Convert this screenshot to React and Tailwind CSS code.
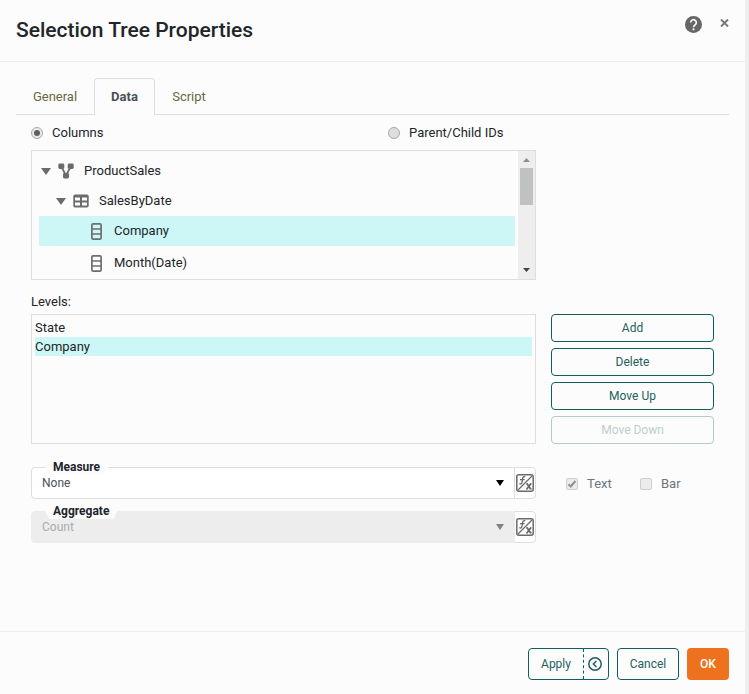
import React from "react";

function Caret({ className }) {
  return (
    <svg viewBox="0 0 10 6" preserveAspectRatio="none" className={className} aria-hidden="true">
      <path d="M0 0H10L5 6Z" fill="currentColor" />
    </svg>
  );
}

function SourceIcon() {
  return (
    <svg viewBox="0 0 16 16" className="size-4" fill="#6b6b6b" aria-hidden="true">
      <path d="M3.5 4L8 12.5L12.5 4" fill="none" stroke="#6b6b6b" strokeWidth="1.7" />
      <rect x="0.3" y="0.5" width="6" height="5.5" rx="1.4" />
      <rect x="9.7" y="0.5" width="6" height="5.5" rx="1.4" />
      <rect x="5" y="10" width="6" height="5.5" rx="1.4" />
    </svg>
  );
}

function TableIcon() {
  return (
    <svg viewBox="0 0 16 14" className="h-3.5 w-4" aria-hidden="true">
      <rect x="0.3" y="0.5" width="15.4" height="13" rx="1.8" fill="#6b6b6b" />
      <path d="M2 3.500h5v3H2zM9 3.500h5v3H9zM2 8.500h5v3H2zM9 8.500h5v3H9z" fill="#fcfcfc" />
    </svg>
  );
}

function ColumnIcon() {
  return (
    <svg viewBox="0 0 11 17" className="h-[17px] w-[11px]" fill="none" stroke="#6e6e6e" strokeWidth="1.7" aria-hidden="true">
      <rect x="0.9" y="0.9" width="9.2" height="15.200" rx="1.2" />
      <path d="M1 6h9M1 11h9" />
    </svg>
  );
}

function FormulaIcon() {
  return (
    <svg viewBox="0 0 18 18" className="size-[18px]" fill="none" stroke="#6a6a6a" aria-hidden="true">
      <rect x="0.8" y="0.8" width="16.4" height="16.4" rx="2" strokeWidth="1.5" />
      <path d="M2 16L16 2" strokeWidth="1.2" />
      <path d="M9.300 3C7.800 2.200 6.900 3 6.700 4.200L5.900 8.600C5.700 9.900 4.700 10.300 3.300 9.700M3.900 5.700H8.600" strokeWidth="1.3" />
      <path d="M11 9.800L14.800 15M14.800 9.800L10.900 15" strokeWidth="1.800" />
      <path d="M10.200 9.800h1.8M13.800 15h1.900M10 15h1.800M13.900 9.800h1.700" strokeWidth="1" />
    </svg>
  );
}

function Radio({ id, label, checked }) {
  return (
    <div className="flex items-center gap-[9px]">
      <span className="grid size-3 place-items-center">
        <input
          id={id}
          type="radio"
          name="mode"
          defaultChecked={checked}
          className="peer col-start-1 row-start-1 size-3 appearance-none rounded-full border border-[#a9a9a9] bg-[#dedede] checked:bg-[#e8e8e8]"
        />
        <span className="pointer-events-none col-start-1 row-start-1 hidden size-1.5 rounded-full bg-[#606060] peer-checked:block" />
      </span>
      <label htmlFor={id}>{label}</label>
    </div>
  );
}

function Check({ id, label, checked }) {
  return (
    <div className="flex w-[75px] items-center gap-[9px] text-[#6c757d]">
      <span className="grid size-3 place-items-center">
        <input
          id={id}
          type="checkbox"
          disabled
          defaultChecked={checked}
          className="peer col-start-1 row-start-1 size-3 appearance-none rounded-[2px] border border-[#cfcfcf] bg-[#ececec]"
        />
        <svg viewBox="0 0 10 10" className="pointer-events-none col-start-1 row-start-1 hidden size-2.5 peer-checked:block" aria-hidden="true">
          <path d="M1.500 5.300L3.800 7.500L8.400 2" fill="none" stroke="#8f9392" strokeWidth="2.2" />
        </svg>
      </span>
      <label htmlFor={id}>{label}</label>
    </div>
  );
}

function TreeNode({ children, icon, expanded, className }) {
  return (
    <li role="treeitem" aria-expanded={expanded} className={className}>
      {expanded && (
        <button type="button" aria-label="Collapse" className="mr-[7px]">
          <Caret className="h-[7px] w-2.5 text-[#6b6b6b]" />
        </button>
      )}
      {icon}
      <span>{children}</span>
    </li>
  );
}

function FormulaSelect({ id, label, value, disabled }) {
  return (
    <div className="relative flex h-8">
      <label
        htmlFor={id}
        className="absolute -top-2 left-3.5 z-10 h-4 bg-[#fcfcfc] px-2 text-[12px] leading-4 font-bold text-[#212529] [clip-path:polygon(0_0,100%_0,100%_50%,calc(100%-4px)_100%,4px_100%,0_50%)]"
      >
        {label}
      </label>
      <div className="relative flex-1">
        <select
          id={id}
          disabled={disabled}
          className="block h-8 w-full appearance-none rounded-l-[4px] border border-[#dedede] bg-white px-2.5 text-[12px] text-[#495057] disabled:border-[#ededed] disabled:bg-[#ededed] disabled:text-[#a9acad] disabled:opacity-100"
        >
          <option>{value}</option>
        </select>
        <Caret
          className={
            disabled
              ? "pointer-events-none absolute top-[13px] right-[11px] h-1.5 w-2 text-[#808080]"
              : "pointer-events-none absolute top-[13px] right-[11px] h-1.5 w-2 text-black"
          }
        />
      </div>
      <button
        type="button"
        aria-label={"Edit " + label + " formula"}
        className="-ml-px flex w-[22px] items-center justify-center rounded-r-[4px] border border-[#dedede] bg-white"
      >
        <FormulaIcon />
      </button>
    </div>
  );
}

const actionClass =
  "h-7 w-full rounded-[4px] border border-[#0f6059] text-[12px] text-[#24605c] disabled:border-[#b3cac9] disabled:text-[#bccfce]";

export default function App() {
  return (
    <div className="flex min-h-screen border-r-4 border-[#eeeeee] bg-[#fcfcfc] font-[Roboto,sans-serif] text-[13px] leading-5 text-[#212529]">
      <div className="flex flex-1 flex-col">
        <header className="flex h-[62px] items-start justify-between border-b border-[#ececec] px-4">
          <h1 className="pt-4 text-[21px] leading-7 font-medium">Selection Tree Properties</h1>
          <div className="flex items-start">
            <button type="button" aria-label="Help" className="mt-4 mr-[18px] text-[#666]">
              <svg viewBox="0 0 24 24" className="block size-[17px]" aria-hidden="true">
                <circle cx="12" cy="12" r="12" fill="currentColor" />
                <path d="M8 9.200a4 4 0 1 1 6.400 3.200C12.900 13.500 12 14.100 12 16" fill="none" stroke="#fcfcfc" strokeWidth="2.300" />
                <rect x="10.700" y="17.500" width="2.600" height="2.600" fill="#fcfcfc" />
              </svg>
            </button>
            <button type="button" aria-label="Close" className="mt-[19px] text-[#757575]">
              <svg viewBox="0 0 9 8" className="block h-2 w-[9px]" aria-hidden="true">
                <path d="M1 0.500L8 7.500M8 0.500L1 7.500" stroke="currentColor" strokeWidth="1.900" />
              </svg>
            </button>
          </div>
        </header>

        <main className="flex-1">
          <div className="px-4 pt-4">
            <nav role="tablist" className="flex h-[37px] border-b border-[#dedede] text-[#68683f]">
              <button type="button" role="tab" className="w-[78px] pt-px">General</button>
              <button
                type="button"
                role="tab"
                aria-selected="true"
                className="-mb-px w-[61px] rounded-t-[4px] border border-b-0 border-[#dedede] bg-[#fcfcfc] font-bold text-[#495057]"
              >
                Data
              </button>
              <button type="button" role="tab" className="w-[68px] pt-px">Script</button>
            </nav>
          </div>

          <div className="grid grid-cols-2 pt-2 pb-1.5 pl-[31px]">
            <Radio id="columns" label="Columns" checked />
            <Radio id="ids" label="Parent/Child IDs" />
          </div>

          <div className="grid grid-cols-[1fr_163px] gap-x-[15px] px-[31px] pt-px">
            <div className="flex h-[130px] border border-[#dedede]">
              <ul role="tree" className="flex-1 overflow-hidden pt-[5px] pr-[3px] pl-[7px]">
                <TreeNode expanded icon={<span className="mr-2.5"><SourceIcon /></span>} className="flex h-[30px] items-center pl-0.5">
                  ProductSales
                </TreeNode>
                <TreeNode expanded icon={<span className="mr-2.5"><TableIcon /></span>} className="flex h-[30px] items-center pl-[17px]">
                  SalesByDate
                </TreeNode>
                <TreeNode icon={<span className="mr-3"><ColumnIcon /></span>} className="flex h-[30px] items-center bg-[#cdf7f6] pl-[52px]">
                  Company
                </TreeNode>
                <TreeNode icon={<span className="mr-3"><ColumnIcon /></span>} className="flex h-[34px] items-center pl-[52px]">
                  Month(Date)
                </TreeNode>
              </ul>
              <div className="flex w-[17px] flex-col items-center bg-[#eeeeee] py-[7px]">
                <Caret className="h-1 w-[7px] rotate-180 text-[#8f8f8f]" />
                <div className="mt-1.5 h-[37px] w-[13px] bg-[#c0c2c1]" />
                <Caret className="mt-auto h-1 w-[7px] text-[#404448]" />
              </div>
            </div>

            <p id="levels" className="col-span-2 mt-3 mb-0.5">Levels:</p>

            <ul role="listbox" aria-labelledby="levels" className="h-[130px] border border-[#dedede] p-[3px] leading-[19px]">
              <li role="option" aria-selected="false">State</li>
              <li role="option" aria-selected="true" className="bg-[#cdf7f6]">Company</li>
            </ul>
            <div className="flex flex-col gap-1.5">
              <button type="button" className={actionClass}>Add</button>
              <button type="button" className={actionClass}>Delete</button>
              <button type="button" className={actionClass}>Move Up</button>
              <button type="button" disabled className={actionClass}>Move Down</button>
            </div>

            <div className="mt-[23px] flex flex-col gap-3">
              <FormulaSelect id="measure" label="Measure" value="None" />
              <FormulaSelect id="aggregate" label="Aggregate" value="Count" disabled />
            </div>
            <div className="mt-6 flex h-8 items-center self-start pl-[15px]">
              <Check id="text" label="Text" checked />
              <Check id="bar" label="Bar" />
            </div>
          </div>
        </main>

        <footer className="flex justify-end gap-2 border-t border-[#ececec] px-4 pt-4 pb-3.5 text-[12px] text-[#24605c]">
          <div className="flex h-8 rounded-[4px] border border-[#0f6059]">
            <button type="button" className="w-[54px]">Apply</button>
            <button type="button" aria-label="Collapse panel" className="flex w-[25px] items-center border-l border-dashed border-[#0f6059] pl-1">
              <svg viewBox="0 0 14 14" className="size-3.5" fill="none" stroke="#24605c" strokeWidth="1.500" aria-hidden="true">
                <circle cx="7" cy="7" r="6.200" />
                <path d="M8.400 4L5.400 7L8.400 10" />
              </svg>
            </button>
          </div>
          <button type="button" className="h-8 w-[62px] rounded-[4px] border border-[#0f6059]">Cancel</button>
          <button type="button" className="h-8 w-[42px] rounded-[4px] bg-[#ee721d] font-medium text-white">OK</button>
        </footer>
      </div>
    </div>
  );
}
